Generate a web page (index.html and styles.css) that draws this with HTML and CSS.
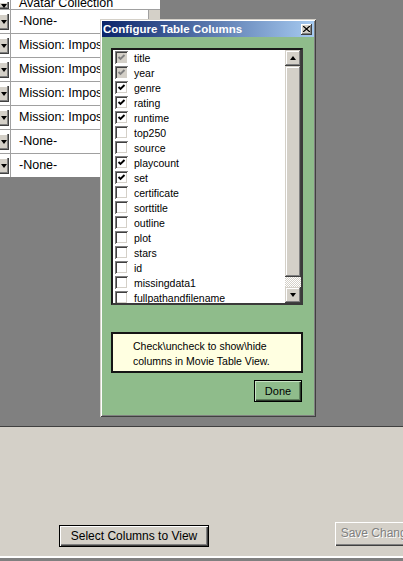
FILE: index.html
```html
<!DOCTYPE html>
<html>
<head>
<meta charset="utf-8">
<link rel="stylesheet" href="styles.css">
</head>
<body>
<div class="screen">
  <div class="workspace">
    <div class="grid-wrap">
      <div class="row first"><span class="drop"><i class="tri-down"></i></span><span class="cell">Avatar Collection</span><span class="edge"></span></div>
      <div class="row"><span class="drop"><i class="tri-down"></i></span><span class="cell">-None-</span><span class="edge"></span></div>
      <div class="row"><span class="drop"><i class="tri-down"></i></span><span class="cell">Mission: Impossible</span><span class="edge"></span></div>
      <div class="row"><span class="drop"><i class="tri-down"></i></span><span class="cell">Mission: Impossible</span><span class="edge"></span></div>
      <div class="row"><span class="drop"><i class="tri-down"></i></span><span class="cell">Mission: Impossible</span><span class="edge"></span></div>
      <div class="row"><span class="drop"><i class="tri-down"></i></span><span class="cell">Mission: Impossible</span><span class="edge"></span></div>
      <div class="row"><span class="drop"><i class="tri-down"></i></span><span class="cell">-None-</span><span class="edge"></span></div>
      <div class="row"><span class="drop"><i class="tri-down"></i></span><span class="cell">-None-</span><span class="edge"></span></div>
    </div>

    <div class="dialog">
      <div class="titlebar">
        <span class="title">Configure Table Columns</span>
        <span class="close"><svg width="7" height="6" viewBox="0 0 7 6"><path d="M0 0 L7 6 M7 0 L0 6" stroke="#000" stroke-width="1.3"/></svg></span>
      </div>
      <div class="dlg-body">
        <div class="listbox">
          <div class="items">
            <div class="item"><span class="cb disabled"><svg viewBox="0 0 9 9"><path d="M1.5 4 L3.5 6 L7.5 2" /></svg></span>title</div>
            <div class="item"><span class="cb disabled"><svg viewBox="0 0 9 9"><path d="M1.5 4 L3.5 6 L7.5 2" /></svg></span>year</div>
            <div class="item"><span class="cb"><svg viewBox="0 0 9 9"><path d="M1.5 4 L3.5 6 L7.5 2" /></svg></span>genre</div>
            <div class="item"><span class="cb"><svg viewBox="0 0 9 9"><path d="M1.5 4 L3.5 6 L7.5 2" /></svg></span>rating</div>
            <div class="item"><span class="cb"><svg viewBox="0 0 9 9"><path d="M1.5 4 L3.5 6 L7.5 2" /></svg></span>runtime</div>
            <div class="item"><span class="cb"></span>top250</div>
            <div class="item"><span class="cb"></span>source</div>
            <div class="item"><span class="cb"><svg viewBox="0 0 9 9"><path d="M1.5 4 L3.5 6 L7.5 2" /></svg></span>playcount</div>
            <div class="item"><span class="cb"><svg viewBox="0 0 9 9"><path d="M1.5 4 L3.5 6 L7.5 2" /></svg></span>set</div>
            <div class="item"><span class="cb"></span>certificate</div>
            <div class="item"><span class="cb"></span>sorttitle</div>
            <div class="item"><span class="cb"></span>outline</div>
            <div class="item"><span class="cb"></span>plot</div>
            <div class="item"><span class="cb"></span>stars</div>
            <div class="item"><span class="cb"></span>id</div>
            <div class="item"><span class="cb"></span>missingdata1</div>
            <div class="item"><span class="cb"></span>fullpathandfilename</div>
          </div>
          <div class="scrollbar">
            <span class="sbtn"><i class="tri-up"></i></span>
            <span class="thumb"></span>
            <span class="track"></span>
            <span class="sbtn"><i class="tri-down"></i></span>
          </div>
        </div>
        <div class="info">Check\uncheck to show\hide<br>columns in Movie Table View.</div>
        <div class="actions"><span class="done">Done</span></div>
      </div>
    </div>
  </div>

  <div class="panel">
    <span class="btn default">Select Columns to View</span>
    <span class="btn disabled-btn">Save Changes</span>
  </div>
  <div class="statusline"></div>
</div>
</body>
</html>
```

FILE: styles.css
```css
* { box-sizing: border-box; }
html, body { margin: 0; padding: 0; }
body {
  width: 403px;
  height: 561px;
  overflow: hidden;
  background: #808080;
  font-family: "Liberation Sans", Arial, sans-serif;
}
.screen { width: 403px; height: 561px; display: flex; flex-direction: column; }

.workspace {
  position: relative;
  height: 427px;
  flex-shrink: 0;
  background: #808080;
  border-bottom: 1px solid #404040;
}

/* background grid */
.grid-wrap { width: 160px; height: 177px; overflow: hidden; background: #fff; }
.row {
  display: flex;
  height: 24px;
  border-bottom: 1px solid #a0a0a0;
  background: #fff;
}
.row.first { height: 10px; align-items: flex-end; }
.row.first .drop { height: 7px; margin-top: 0; }
.row.first .cell { line-height: 12px; height: 9px; overflow: visible; display: flex; align-items: flex-end; }
.drop {
  width: 9px;
  height: 16px;
  margin-top: 4px;
  background: #d4d0c8;
  box-shadow: inset -1px -1px #404040, inset -2px -2px #808080, inset 0 1px #fff;
  display: flex;
  align-items: center;
  justify-content: center;
  padding-right: 2px;
  flex-shrink: 0;
}
.cell {
  flex: 1;
  margin-left: 1px;
  border-left: 1px solid #a0a0a0;
  padding-left: 8px;
  font-size: 12.5px;
  line-height: 23px;
  color: #000;
  white-space: nowrap;
  overflow: hidden;
}
.edge {
  width: 12px;
  flex-shrink: 0;
  border-left: 1px solid #a0a0a0;
  background: #d4d0c8;
}

.tri-down, .tri-up {
  display: block;
  width: 0; height: 0;
  border-left: 3.5px solid transparent;
  border-right: 3.5px solid transparent;
}
.tri-down { border-top: 4px solid #000; }
.tri-up { border-bottom: 4px solid #000; }

/* dialog window */
.dialog {
  position: absolute;
  left: 100px;
  top: 19px;
  width: 216px;
  height: 398px;
  background: #8fbc8b;
  padding: 2px;
  box-shadow: inset 1px 1px #d4d0c8, inset -1px -1px #404040, inset 2px 2px #fff, inset -2px -2px #808080;
  display: flex;
  flex-direction: column;
}
.titlebar {
  height: 16px;
  background: linear-gradient(to right, #0a246a, #a6caf0);
  display: flex;
  align-items: center;
  padding: 0 2px 0 1px;
}
.title {
  color: #fff;
  font-weight: bold;
  font-size: 11.5px;
  white-space: nowrap;
}
.close {
  margin-left: auto;
  width: 11px;
  height: 11px;
  background: #d4d0c8;
  box-shadow: inset -1px -1px #404040, inset 1px 1px #fff, inset -2px -2px #808080;
  display: flex;
  align-items: center;
  justify-content: center;
  padding: 0 1px 1px 0;
}

.dlg-body {
  flex: 1;
  padding: 11px 11px 0 9px;
  display: flex;
  flex-direction: column;
}
.listbox {
  height: 257px;
  background: #fff;
  border: 2px solid;
  border-color: #1a1a1a #3a3a3a #3a3a3a #1a1a1a;
  display: flex;
}
.items { flex: 1; overflow: hidden; }
.item {
  height: 15px;
  display: flex;
  align-items: center;
  font-size: 10.5px;
  color: #000;
  white-space: nowrap;
}
.cb {
  width: 13px;
  height: 13px;
  margin: 0 6px 0 2px;
  background: #fff;
  box-shadow: inset 1px 1px #808080, inset -1px -1px #fff, inset 2px 2px #404040, inset -2px -2px #d4d0c8;
  padding: 2px;
  display: flex;
}
.cb svg { width: 9px; height: 9px; }
.cb path { fill: none; stroke: #000; stroke-width: 1.9; }
.cb.disabled { background: #d4d0c8; }
.cb.disabled path { stroke: #808080; }

.scrollbar {
  width: 16px;
  display: flex;
  flex-direction: column;
}
.sbtn {
  height: 16px;
  background: #d4d0c8;
  box-shadow: inset -1px -1px #404040, inset 1px 1px #d4d0c8, inset -2px -2px #808080, inset 2px 2px #fff;
  display: flex;
  align-items: center;
  justify-content: center;
}
.thumb {
  height: 211px;
  background: #d4d0c8;
  box-shadow: inset -1px -1px #404040, inset 1px 1px #d4d0c8, inset -2px -2px #808080, inset 2px 2px #fff;
}
.track {
  flex: 1;
  background: repeating-conic-gradient(#d4d0c8 0 25%, #fff 0 50%) 0 0 / 2px 2px;
}

.info {
  margin-top: 27px;
  height: 41px;
  background: #ffffe1;
  border: 2px solid #151515;
  padding: 5px 0 0 20px;
  font-size: 10.5px;
  line-height: 15px;
  color: #000;
  white-space: nowrap;
}
.actions {
  display: flex;
  justify-content: flex-end;
  margin-top: 7px;
  padding-right: 1px;
}
.done {
  width: 48px;
  height: 22px;
  border: 1px solid #000;
  background: #8fbc8b;
  box-shadow: inset 1px 1px #c8e4c4, inset -1px -1px #2a3a2a, inset -2px -2px #5f805c;
  font-size: 11px;
  line-height: 20px;
  text-align: center;
  color: #000;
}

/* bottom panel */
.panel {
  height: 129px;
  flex-shrink: 0;
  background: #d4d0c8;
  display: flex;
  align-items: flex-end;
  padding: 0 0 9px 59px;
}
.btn {
  height: 22px;
  flex-shrink: 0;
  font-size: 12px;
  line-height: 20px;
  text-align: center;
  white-space: nowrap;
  color: #000;
  background: #d4d0c8;
}
.btn.default {
  width: 150px;
  border: 1px solid #000;
  box-shadow: inset 1px 1px #fff, inset -1px -1px #404040, inset -2px -2px #808080;
}
.btn.disabled-btn {
  width: 90px;
  height: 24px;
  line-height: 23px;
  margin: 0 0 1px 126px;
  color: #808080;
  text-shadow: 1px 1px #fff;
  box-shadow: inset 1px 1px #fff, inset -1px -1px #404040, inset -2px -2px #808080;
}
.statusline {
  height: 5px;
  flex-shrink: 0;
  border-top: 2px solid #fff;
  background: #808080;
}
```
